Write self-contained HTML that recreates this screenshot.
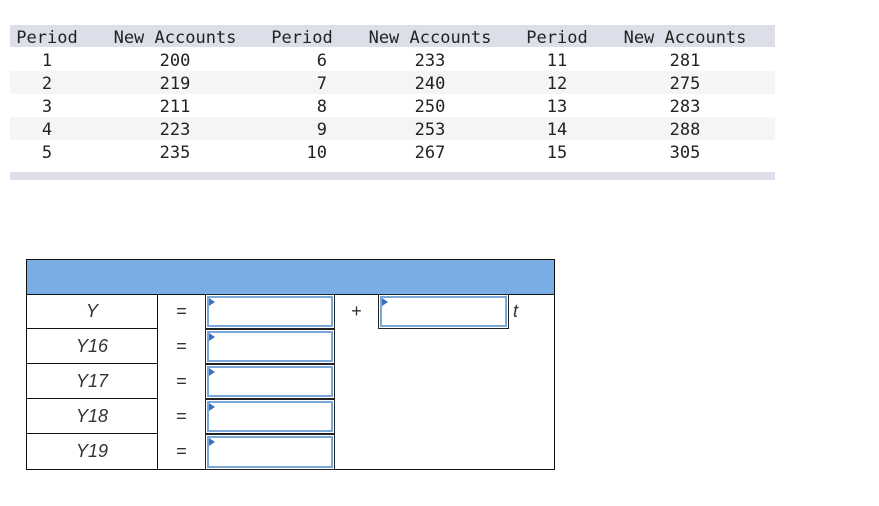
<!DOCTYPE html>
<html><head><meta charset="utf-8"><style>
body{margin:0;background:#fff;width:879px;height:506px;position:relative;overflow:hidden}
.t{position:absolute;font-family:"DejaVu Sans Mono","Liberation Mono",monospace;font-size:17px;color:#222}
.c{position:absolute;transform:translateX(-50%);white-space:nowrap}
.r{position:absolute;transform:translateX(-100%)}
.a{position:absolute;font-family:"Liberation Sans",sans-serif;color:#333}
.b{position:absolute;box-sizing:border-box}
.inp{position:absolute;box-sizing:border-box;border:1px solid #222;background:#fff}
.inp::before{content:"";position:absolute;left:1px;top:1px;right:1px;bottom:1px;border:2px solid #7aa6d8}
.inp::after{content:"";position:absolute;left:3px;top:3px;border-left:6px solid #3a72c0;border-top:4px solid transparent;border-bottom:4px solid transparent}
</style></head><body>
<div class="b" style="left:10px;top:25px;width:765px;height:22px;background:#dcdfea"></div>
<div class="b" style="left:10px;top:71px;width:765px;height:23px;background:#f5f5f5"></div>
<div class="b" style="left:10px;top:117px;width:765px;height:23px;background:#f5f5f5"></div>
<div class="b" style="left:10px;top:172px;width:765px;height:8px;background:#dcdfea"></div>
<div class="t" style="left:0;top:28px;width:879px;height:160px">
<span class="c" style="left:47px;top:0">Period</span>
<span class="c" style="left:175px;top:0">New Accounts</span>
<span class="c" style="left:302px;top:0">Period</span>
<span class="c" style="left:430px;top:0">New Accounts</span>
<span class="c" style="left:557px;top:0">Period</span>
<span class="c" style="left:685px;top:0">New Accounts</span>
<span class="c" style="left:47px;top:23px">1</span><span class="c" style="left:175px;top:23px">200</span><span class="r" style="left:327px;top:23px">6</span><span class="c" style="left:430px;top:23px">233</span><span class="c" style="left:557px;top:23px">11</span><span class="c" style="left:685px;top:23px">281</span>
<span class="c" style="left:47px;top:46px">2</span><span class="c" style="left:175px;top:46px">219</span><span class="r" style="left:327px;top:46px">7</span><span class="c" style="left:430px;top:46px">240</span><span class="c" style="left:557px;top:46px">12</span><span class="c" style="left:685px;top:46px">275</span>
<span class="c" style="left:47px;top:69px">3</span><span class="c" style="left:175px;top:69px">211</span><span class="r" style="left:327px;top:69px">8</span><span class="c" style="left:430px;top:69px">250</span><span class="c" style="left:557px;top:69px">13</span><span class="c" style="left:685px;top:69px">283</span>
<span class="c" style="left:47px;top:92px">4</span><span class="c" style="left:175px;top:92px">223</span><span class="r" style="left:327px;top:92px">9</span><span class="c" style="left:430px;top:92px">253</span><span class="c" style="left:557px;top:92px">14</span><span class="c" style="left:685px;top:92px">288</span>
<span class="c" style="left:47px;top:115px">5</span><span class="c" style="left:175px;top:115px">235</span><span class="r" style="left:327px;top:115px">10</span><span class="c" style="left:430px;top:115px">267</span><span class="c" style="left:557px;top:115px">15</span><span class="c" style="left:685px;top:115px">305</span>
</div>

<div class="b" style="left:26px;top:259px;width:529px;height:211px;border:1px solid #111"></div>
<div class="b" style="left:27px;top:260px;width:527px;height:34px;background:#7aade4"></div>
<div class="b" style="left:26px;top:294px;width:132px;height:176px;border:1px solid #111"></div>
<div class="b" style="left:26px;top:328px;width:132px;height:1px;background:#111"></div>
<div class="b" style="left:26px;top:363px;width:132px;height:1px;background:#111"></div>
<div class="b" style="left:26px;top:398px;width:132px;height:1px;background:#111"></div>
<div class="b" style="left:26px;top:433px;width:132px;height:1px;background:#111"></div>
<div class="b" style="left:334px;top:294px;width:1px;height:176px;background:#111"></div>
<div class="b" style="left:27px;top:294px;width:527px;height:1px;background:#111"></div>

<div class="inp" style="left:205px;top:294px;width:130px;height:35px"></div>
<div class="inp" style="left:205px;top:329px;width:130px;height:35px"></div>
<div class="inp" style="left:205px;top:364px;width:130px;height:35px"></div>
<div class="inp" style="left:205px;top:399px;width:130px;height:35px"></div>
<div class="inp" style="left:205px;top:434px;width:130px;height:36px"></div>
<div class="inp" style="left:378px;top:294px;width:131px;height:35px"></div>

<div class="a" style="left:26px;top:301px;width:132px;text-align:center;font-size:18px;font-style:italic">Y</div>
<div class="a" style="left:26px;top:336px;width:132px;text-align:center;font-size:18px;font-style:italic">Y16</div>
<div class="a" style="left:26px;top:371px;width:132px;text-align:center;font-size:18px;font-style:italic">Y17</div>
<div class="a" style="left:26px;top:406px;width:132px;text-align:center;font-size:18px;font-style:italic">Y18</div>
<div class="a" style="left:26px;top:441px;width:132px;text-align:center;font-size:18px;font-style:italic">Y19</div>
<div class="a" style="left:158px;top:301px;width:47px;text-align:center;font-size:18px">=</div>
<div class="a" style="left:158px;top:336px;width:47px;text-align:center;font-size:18px">=</div>
<div class="a" style="left:158px;top:371px;width:47px;text-align:center;font-size:18px">=</div>
<div class="a" style="left:158px;top:406px;width:47px;text-align:center;font-size:18px">=</div>
<div class="a" style="left:158px;top:441px;width:47px;text-align:center;font-size:18px">=</div>
<div class="a" style="left:335px;top:301px;width:43px;text-align:center;font-size:18px">+</div>
<div class="a" style="left:513px;top:301px;font-size:18px;font-style:italic">t</div>
</body></html>
